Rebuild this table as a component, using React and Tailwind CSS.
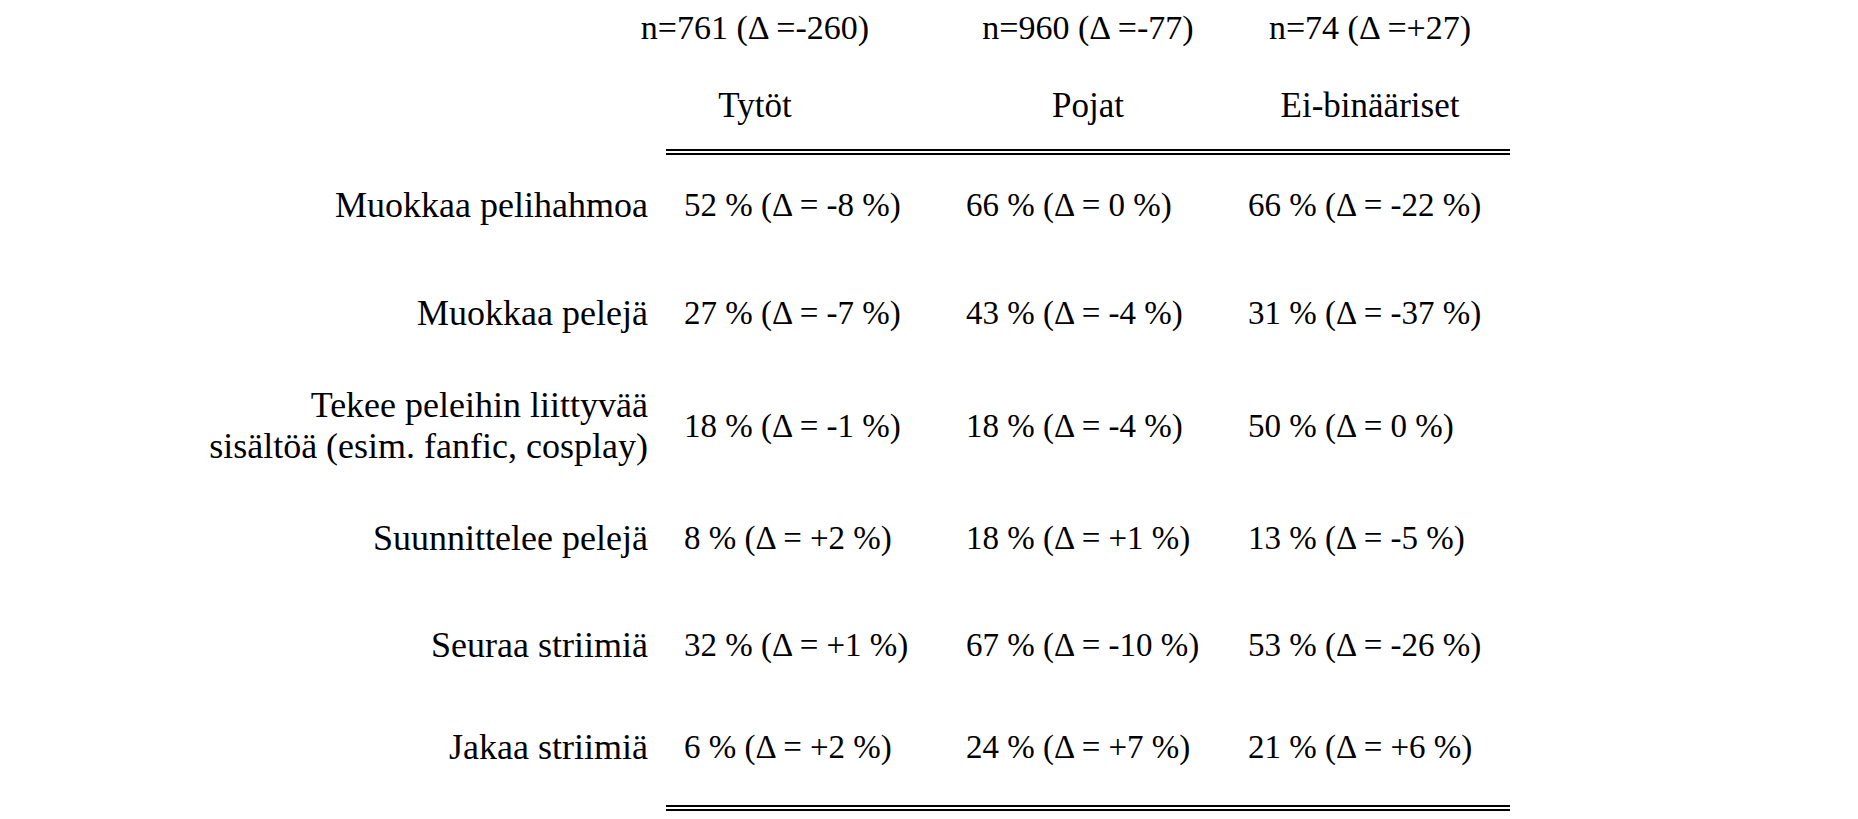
import React from "react";

const rows = [
  { label: ["Muokkaa pelihahmoa"], cells: ["52 % (Δ = -8 %)", "66 % (Δ = 0 %)", "66 % (Δ = -22 %)"], mt: "mt-[30px]", h: "h-[41px]" },
  { label: ["Muokkaa pelejä"], cells: ["27 % (Δ = -7 %)", "43 % (Δ = -4 %)", "31 % (Δ = -37 %)"], mt: "mt-[67px]", h: "h-[41px]" },
  { label: ["Tekee peleihin liittyvää", "sisältöä (esim. fanfic, cosplay)"], cells: ["18 % (Δ = -1 %)", "18 % (Δ = -4 %)", "50 % (Δ = 0 %)"], mt: "mt-[51px]", h: "h-[82px]" },
  { label: ["Suunnittelee pelejä"], cells: ["8 % (Δ = +2 %)", "18 % (Δ = +1 %)", "13 % (Δ = -5 %)"], mt: "mt-[51px]", h: "h-[41px]" },
  { label: ["Seuraa striimiä"], cells: ["32 % (Δ = +1 %)", "67 % (Δ = -10 %)", "53 % (Δ = -26 %)"], mt: "mt-[66px]", h: "h-[41px]" },
  { label: ["Jakaa striimiä"], cells: ["6 % (Δ = +2 %)", "24 % (Δ = +7 %)", "21 % (Δ = +6 %)"], mt: "mt-[61px]", h: "h-[41px]" },
];

const heads = ["n=761 (Δ =-260)", "n=960 (Δ =-77)", "n=74 (Δ =+27)"];
const titles = ["Tytöt", "Pojat", "Ei-binääriset"];

function DoubleRule({ mt }) {
  return (
    <div className={`${mt} ml-[666px] w-[844px] flex flex-col gap-[2px]`}>
      <div className="h-[2px] bg-black" />
      <div className="h-[2px] bg-black" />
    </div>
  );
}

export default function App() {
  return (
    <div
      className="w-[1858px] h-[819px] bg-white text-black overflow-hidden pt-[7px]"
      style={{ fontFamily: '"Liberation Serif", "Times New Roman", serif' }}
    >
      {/* n row */}
      <div className="flex h-[41px] pl-[625px] text-[34px] leading-[41px] whitespace-nowrap">
        <div className="w-[260px] flex justify-center">{heads[0]}</div>
        <div className="w-[260px] ml-[73px] flex justify-center">{heads[1]}</div>
        <div className="w-[260px] ml-[22px] flex justify-center">{heads[2]}</div>
      </div>
      {/* titles row */}
      <div className="flex h-[41px] mt-[37px] pl-[625px] text-[35px] leading-[41px] whitespace-nowrap">
        <div className="w-[260px] flex justify-center">{titles[0]}</div>
        <div className="w-[260px] ml-[73px] flex justify-center">{titles[1]}</div>
        <div className="w-[260px] ml-[22px] flex justify-center">{titles[2]}</div>
      </div>
      <DoubleRule mt="mt-[23px]" />
      {rows.map((r, i) => (
        <div key={i} className={`${r.mt} ${r.h} grid grid-cols-[648px_36px_282px_282px_282px] whitespace-nowrap`}>
          <div className="text-right text-[36px] leading-[41px]">
            {r.label.map((l, j) => (
              <div key={j}>{l}</div>
            ))}
          </div>
          <div />
          {r.cells.map((c, j) => (
            <div key={j} className="flex items-center text-[33px] leading-[41px]">
              {c}
            </div>
          ))}
        </div>
      ))}
      <DoubleRule mt="mt-[37px]" />
    </div>
  );
}
